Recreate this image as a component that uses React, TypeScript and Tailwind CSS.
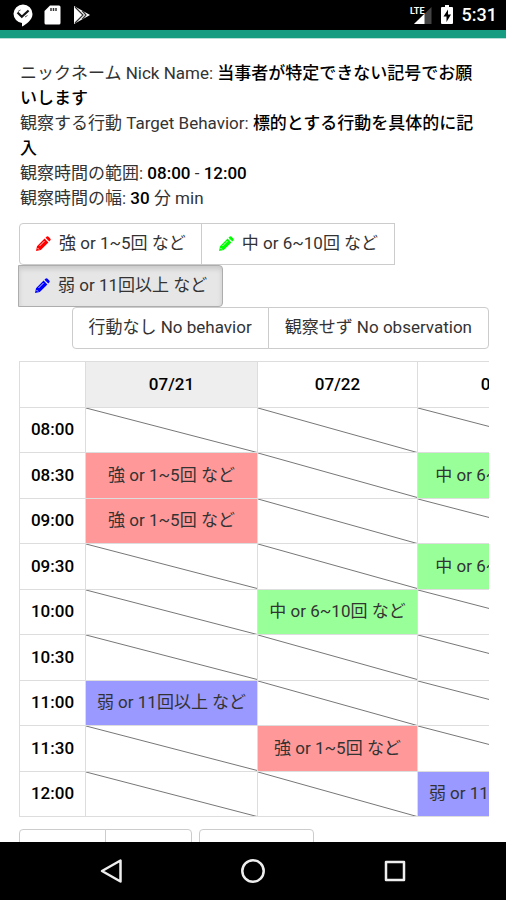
import type { ReactNode } from "react";

type Level = "strong" | "medium" | "weak";

const LABELS: Record<Level, string> = {
  strong: "強 or 1~5回 など",
  medium: "中 or 6~10回 など",
  weak: "弱 or 11回以上 など",
};

const CELL_COLORS: Record<Level, string> = {
  strong: "bg-[#ff9999]",
  medium: "bg-[#99ff99]",
  weak: "bg-[#9999ff]",
};

const DATES = ["07/21", "07/22", "07/23"];

const ROWS: { time: string; cells: (Level | null)[] }[] = [
  { time: "08:00", cells: [null, null, null] },
  { time: "08:30", cells: ["strong", null, "medium"] },
  { time: "09:00", cells: ["strong", null, null] },
  { time: "09:30", cells: [null, null, "medium"] },
  { time: "10:00", cells: [null, "medium", null] },
  { time: "10:30", cells: [null, null, null] },
  { time: "11:00", cells: ["weak", null, null] },
  { time: "11:30", cells: [null, "strong", null] },
  { time: "12:00", cells: [null, null, "weak"] },
];

const COLUMN_WIDTHS = ["w-[172px]", "w-[160px]", "w-[172px]"];

function StatusBar() {
  return (
    <div className="flex h-[30px] shrink-0 items-center bg-black pr-[9px] pl-3 text-white">
      <svg className="h-[23px] w-[22px]" viewBox="0 0 22 23" aria-hidden="true">
        <path d="M11 .5a9.500 9.500 0 0 0-9.500 9.300A9.400 9.400 0 0 0 10 19V22.500c4-1.900 10.500-6.500 10.500-12.500A9.500 9.500 0 0 0 11 .5z" fill="#fff" />
        <path d="M5.500 8.500l4.300 4.300 6.800-6.300" fill="none" stroke="#111" strokeWidth="2.200" />
        <path d="M6 7.500l2.500-1.500M13 13l2.500-1.500" stroke="#555" strokeWidth="1" />
      </svg>
      <svg className="ml-[10px] h-5 w-[17px]" viewBox="0 0 17 20" aria-hidden="true">
        <path d="M6 .5h9A1.500 1.500 0 0 1 16.500 2v16a1.500 1.500 0 0 1-1.500 1.500H2A1.500 1.500 0 0 1 .5 18V6z" fill="#fff" />
        <path d="M7 3v3M9.500 3v3M12 3v3" stroke="#333" strokeWidth="1.500" />
      </svg>
      <svg className="ml-3 h-5 w-[18px]" viewBox="0 0 18 20" aria-hidden="true">
        <path d="M1 1v18l16-9z" fill="#fff" />
        <path d="M2 2l8 8-8 8M9 5.500l4 4.500-4 4.500" fill="none" stroke="#333" strokeWidth="1.200" />
      </svg>
      <div className="ml-auto flex items-center">
        <svg className="h-5 w-6" viewBox="0 0 24 20" aria-hidden="true">
          <path d="M22.500 2v17H5z" fill="#444" />
          <path d="M15.500 8.800V19H5z" fill="#fff" />
          <path d="M0 0h14v9H0z" fill="#000" />
          <text x="1" y="9" fill="#fff" fontSize="9" fontWeight="700">
            LTE
          </text>
        </svg>
        <svg className="ml-2 h-5 w-3" viewBox="0 0 12 20" aria-hidden="true">
          <path d="M4 0h4v2h3a1 1 0 0 1 1 1v15a1 1 0 0 1-1 1H1a1 1 0 0 1-1-1V3a1 1 0 0 1 1-1h3z" fill="#fff" />
          <path d="M7 4.500L2.500 11.500H5.500V17L10 9.500H7z" fill="#000" />
        </svg>
        <span className="ml-[9px] text-lg leading-5 font-medium">5:31</span>
      </div>
    </div>
  );
}

function Pencil({ className }: { className: string }) {
  return (
    <svg className={`mr-2 size-4 shrink-0 ${className}`} viewBox="0 0 16 16" aria-hidden="true">
      <path d="M1 15l1-4.800 7.600-7.600 3.800 3.800L5.800 14zM10.500 1.700l.9-.9a1.600 1.600 0 0 1 2.200 0l1.600 1.600a1.600 1.600 0 0 1 0 2.200l-.9.9z" fill="currentColor" />
      <path d="M4.500 10l5-5M2.500 12l1.500 1.500" stroke="#fff" strokeWidth=".8" />
    </svg>
  );
}

function GroupButton({ className, pressed, children }: { className: string; pressed?: boolean; children: ReactNode }) {
  return (
    <button
      type="button"
      aria-pressed={pressed}
      className={`flex h-[42px] items-center border whitespace-nowrap ${className}`}
    >
      {children}
    </button>
  );
}

function DiagonalLine() {
  return (
    <svg className="absolute inset-0 size-full" viewBox="0 0 100 100" preserveAspectRatio="none" aria-hidden="true">
      <line x1="0" y1="0" x2="100" y2="100" stroke="#777" strokeWidth="1" vectorEffect="non-scaling-stroke" />
    </svg>
  );
}

function ScheduleTable() {
  return (
    <div className="mt-3 overflow-x-auto overflow-y-hidden [scrollbar-width:none]">
      <table className="h-[456px] w-[571px] table-fixed border-collapse">
        <thead>
          <tr className="h-[46px]">
            <th className="w-[66px] border border-[#ddd]" aria-label="Time" />
            {DATES.map((date, i) => (
              <th
                key={date}
                scope="col"
                className={`border border-[#ddd] p-0 font-medium text-black ${COLUMN_WIDTHS[i]} ${i === 0 ? "bg-[#eee]" : ""}`}
              >
                {date}
              </th>
            ))}
          </tr>
        </thead>
        <tbody>
          {ROWS.map((row) => (
            <tr key={row.time}>
              <th scope="row" className="border border-[#ddd] p-0 font-medium text-black">
                {row.time}
              </th>
              {row.cells.map((level, i) => (
                <td
                  key={DATES[i]}
                  className={`relative border border-[#ddd] p-0 text-center whitespace-nowrap ${level ? CELL_COLORS[level] : ""}`}
                >
                  {level ? LABELS[level] : <DiagonalLine />}
                </td>
              ))}
            </tr>
          ))}
        </tbody>
      </table>
    </div>
  );
}

function NavigationBar() {
  return (
    <nav className="flex h-[58px] shrink-0 items-center justify-center gap-[118px] bg-black">
      <button type="button" aria-label="Back">
        <svg className="size-6" viewBox="0 0 24 24" fill="none" stroke="#eee" strokeWidth="2.500" strokeLinejoin="round">
          <path d="M21.500 1.500v21L3 12z" />
        </svg>
      </button>
      <button type="button" aria-label="Home">
        <svg className="size-6" viewBox="0 0 24 24" fill="none" stroke="#eee" strokeWidth="2.500">
          <circle cx="12" cy="12" r="10.700" />
        </svg>
      </button>
      <button type="button" aria-label="Recent apps">
        <svg className="size-6" viewBox="0 0 24 24" fill="none" stroke="#eee" strokeWidth="2.500" strokeLinejoin="round">
          <rect x="3" y="3" width="18" height="18" />
        </svg>
      </button>
    </nav>
  );
}

export default function App() {
  return (
    <div className="flex h-screen flex-col overflow-hidden bg-white font-[Roboto,'Noto_Sans_CJK_JP',sans-serif] text-[17px] text-[#333]">
      <StatusBar />
      <div className="h-[9px] shrink-0 border-b border-[#b8ddd6] bg-[#169c80]" />
      <main className="min-h-0 flex-1 overflow-hidden pt-[22px] pr-[17px] pl-[19px]">
        <div className="pr-2 pl-px leading-[25px]">
          <p>
            ニックネーム Nick Name: <b className="font-medium text-black">当事者が特定できない記号でお願いします</b>
          </p>
          <p>
            観察する行動 Target Behavior: <b className="font-medium text-black">標的とする行動を具体的に記入</b>
          </p>
          <p>
            観察時間の範囲: <b className="font-medium text-black">08:00</b> - <b className="font-medium text-black">12:00</b>
          </p>
          <p>
            観察時間の幅: <b className="font-medium text-black">30</b> 分 min
          </p>
        </div>
        <div className="mt-3 flex flex-wrap">
          <GroupButton className="rounded-l border-[#ccc] px-[15px]">
            <Pencil className="text-[#ff0000]" />
            {LABELS.strong}
          </GroupButton>
          <GroupButton className="-ml-px border-[#ccc] px-4">
            <Pencil className="text-[#00ff00]" />
            {LABELS.medium}
          </GroupButton>
          <GroupButton
            pressed
            className="-ml-px rounded-r border-[#adadad] bg-[#e6e6e6] px-[15px] shadow-[inset_0_3px_5px_rgba(0,0,0,0.125)]"
          >
            <Pencil className="text-[#0000ff]" />
            {LABELS.weak}
          </GroupButton>
        </div>
        <div className="flex justify-end">
          <GroupButton className="rounded-l border-[#ccc] px-4">行動なし No behavior</GroupButton>
          <GroupButton className="-ml-px rounded-r border-[#ccc] px-4">観察せず No observation</GroupButton>
        </div>
        <ScheduleTable />
        <div className="mt-3 flex">
          <button type="button" aria-label="Previous" className="h-[42px] w-[87px] rounded-l border border-[#ccc]" />
          <button type="button" aria-label="Next" className="-ml-px h-[42px] w-[87px] rounded-r border border-[#ccc]" />
          <button type="button" aria-label="Today" className="ml-[7px] h-[42px] w-[115px] rounded border border-[#ccc]" />
        </div>
      </main>
      <NavigationBar />
    </div>
  );
}
